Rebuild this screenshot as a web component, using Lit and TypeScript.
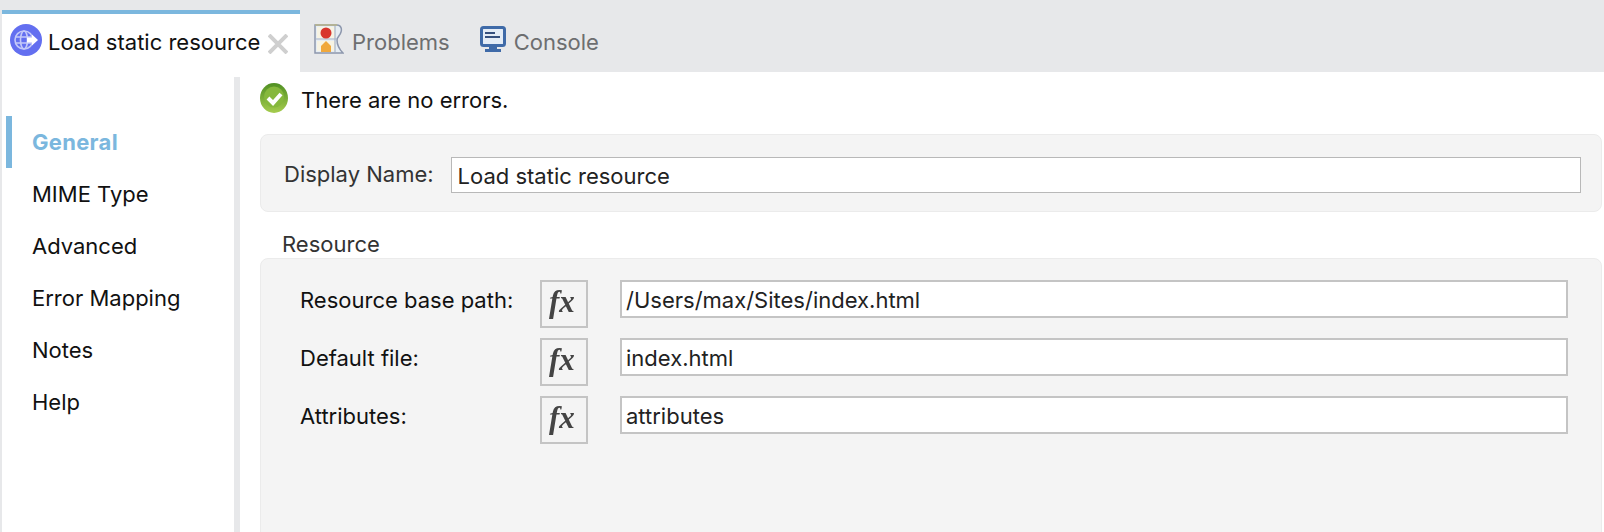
import { LitElement, html, css } from "lit"
import { customElement } from "lit/decorators.js"

const fx = html`<svg width="44" height="44" viewBox="0 0 44 44"><text x="7" y="30" class="fx">fx</text></svg>`

const fields = [
    ["Resource base path:", "/Users/max/Sites/index.html"],
    ["Default file:", "index.html"],
    ["Attributes:", "attributes"],
]

const menu = ["General", "MIME Type", "Advanced", "Error Mapping", "Notes", "Help"]

@customElement("app-root")
export class AppRoot extends LitElement {
    static styles = css`
        :host {
            display: block;
            width: 1604px;
            height: 532px;
            overflow: hidden;
            background: #fff;
            font-family: Inter, "Liberation Sans", sans-serif;
            font-size: 22px;
            color: #111;
        }
        .tabs {
            display: flex;
            height: 72px;
            background: #e7e8ea;
            padding-left: 2px;
            padding-top: 10px;
            box-sizing: border-box;
        }
        .tab {
            display: flex;
            align-items: center;
            color: #6d6e70;
            padding-top: 2px;
        }
        .tab.active {
            width: 298px;
            box-sizing: border-box;
            border-top: 4px solid #7bb7de;
            background: #fff;
            color: #111;
            padding: 0 0 2px 8px;
        }
        .tab.active svg { margin: 0 6px 4px 0; }
        .tab.active svg.close { margin: 3px 0 0 8px; }
        .problems { margin-left: 14px; }
        .console { margin-left: 30px; }
        .problems svg { margin: 0 8px 6px 0; }
        .console svg { margin: 0 8px 6px 0; }
        .body {
            display: flex;
            height: 460px;
            border-left: 2px solid #e7e8ea;
        }
        .side {
            width: 238px;
            box-sizing: border-box;
            margin-top: 5px;
            padding-top: 39px;
            border-right: 6px solid #e7e8ea;
            flex: none;
        }
        .side div {
            height: 52px;
            line-height: 52px;
            padding-left: 20px;
            margin-left: 4px;
            border-left: 6px solid transparent;
            box-sizing: border-box;
        }
        .side .on {
            border-left-color: #7bb7de;
            color: #7bb7de;
            font-weight: 700;
            letter-spacing: 0.3px;
        }
        .main { flex: 1; padding: 0 2px 0 20px; min-width: 0; }
        .status { display: flex; align-items: center; height: 52px; }
        .status svg { margin-right: 13px; }
        .status span { margin-top: 4px; }
        .card {
            background: #f4f4f4;
            border: 1px solid #ebebeb;
            border-radius: 8px;
            box-sizing: border-box;
        }
        .name {
            height: 78px;
            margin-top: 10px;
            display: flex;
            align-items: center;
            padding: 0 20px 0 23px;
            color: #333;
        }
        .name span { margin-top: 2px; }
        input {
            font: inherit;
            color: #222;
            background: #fff;
            box-sizing: border-box;
            border-radius: 0;
            outline: none;
            min-width: 0;
            flex: 1;
        }
        .name input {
            height: 36px;
            margin: 4px 0 0 17px;
            border: 1px solid #b8b8b8;
            padding: 2px 6px 0;
        }
        .legend { color: #333; margin: 18px 0 0 22px; height: 28px; line-height: 28px; }
        .res { height: 300px; padding: 21px 33px 0 39px; }
        .row { display: flex; height: 48px; margin-bottom: 10px; }
        .row label { width: 240px; flex: none; line-height: 40px; }
        .fxb {
            width: 48px;
            height: 48px;
            border: 2px solid #c4c4c4;
            box-sizing: border-box;
            flex: none;
        }
        .fxb svg { display: block; filter: blur(0.4px); }
        .fx {
            font-family: "Liberation Serif", serif;
            font-style: italic;
            font-weight: 700;
            font-size: 31px;
            fill: #444;
        }
        .row input {
            height: 38px;
            margin-left: 32px;
            border: 2px solid #c4c4c4;
            padding: 2px 4px 0;
        }
    `

    render() {
        return html`
            <div class="tabs">
                <div class="tab active">
                    <svg width="32" height="32" viewBox="0 0 32 32">
                        <circle cx="16" cy="16" r="16" fill="#636ff0"/>
                        <circle cx="14" cy="16" r="9" fill="none" stroke="#c3c9f9" stroke-width="1.600"/>
                        <ellipse cx="14" cy="16" rx="3.500" ry="9" fill="none" stroke="#c3c9f9" stroke-width="1.600"/>
                        <path d="M5 13h18M5 19h18" stroke="#c3c9f9" stroke-width="1.400"/>
                        <path d="M17 13.500h5v-3l6 5.500-6 5.500v-3h-5z" fill="#fff"/>
                    </svg>
                    <span>Load static resource</span>
                    <svg class="close" width="20" height="20" viewBox="0 0 20 20">
                        <path d="M1 1l18 18M19 1L1 19" stroke="#cfcfcf" stroke-width="4"/>
                    </svg>
                </div>
                <div class="tab problems">
                    <svg width="30" height="30" viewBox="0 0 30 30">
                        <path d="M1 1h22c4 0 5 4 4 7-1 4-4 5-4 8 0 5 2 9 6 13H1z" fill="#e6edf3" stroke="#8d97ad" stroke-width="1.500"/>
                        <path d="M1 1h22" stroke="#b9b48a" stroke-width="1.500"/>
                        <path d="M3 3h18v11H3zM3 17h18v10H3z" fill="#f7f3e3"/>
                        <path d="M21 2v26M2 15h21" stroke="#a9b4c6" stroke-width="1.200"/>
                        <circle cx="12" cy="9" r="5.500" fill="#d8352d"/>
                        <path d="M7 28v-6l5-5 5 5v6z" fill="#f0a83c"/>
                    </svg>
                    <span>Problems</span>
                </div>
                <div class="tab console">
                    <svg width="26" height="26" viewBox="0 0 26 26">
                        <rect x="1.500" y="1.500" width="23" height="18" rx="2" fill="#e4ecf6" stroke="#3f6aa8" stroke-width="3"/>
                        <path d="M5 7h10M5 11h15" stroke="#36507e" stroke-width="2"/>
                        <path d="M9 21h8v2h4v3H5v-3h4z" fill="#3f6aa8"/>
                    </svg>
                    <span>Console</span>
                </div>
            </div>
            <div class="body">
                <div class="side">
                    ${menu.map((m, i) => html`<div class=${i == 0 ? "on" : ""}>${m}</div>`)}
                </div>
                <div class="main">
                    <div class="status">
                        <svg width="28" height="30" viewBox="0 0 28 30">
                            <defs>
                                <linearGradient id="ok" x1="0" y1="0" x2="0" y2="1">
                                    <stop offset="0" stop-color="#4f8f22"/>
                                    <stop offset="1" stop-color="#a6cc4e"/>
                                </linearGradient>
                            </defs>
                            <ellipse cx="14" cy="15" rx="14" ry="15" fill="url(#ok)"/>
                            <ellipse cx="14" cy="14" rx="10" ry="10.500" fill="#86b83c"/>
                            <path d="M8 15l5 5 8-9" fill="none" stroke="#fff" stroke-width="4"/>
                        </svg>
                        <span>There are no errors.</span>
                    </div>
                    <div class="card name">
                        <span>Display Name:</span>
                        <input value="Load static resource"/>
                    </div>
                    <div class="legend">Resource</div>
                    <div class="card res">
                        ${fields.map(f => html`
                            <div class="row">
                                <label>${f[0]}</label>
                                <div class="fxb">${fx}</div>
                                <input value=${f[1]}/>
                            </div>
                        `)}
                    </div>
                </div>
            </div>
        `
    }
}
